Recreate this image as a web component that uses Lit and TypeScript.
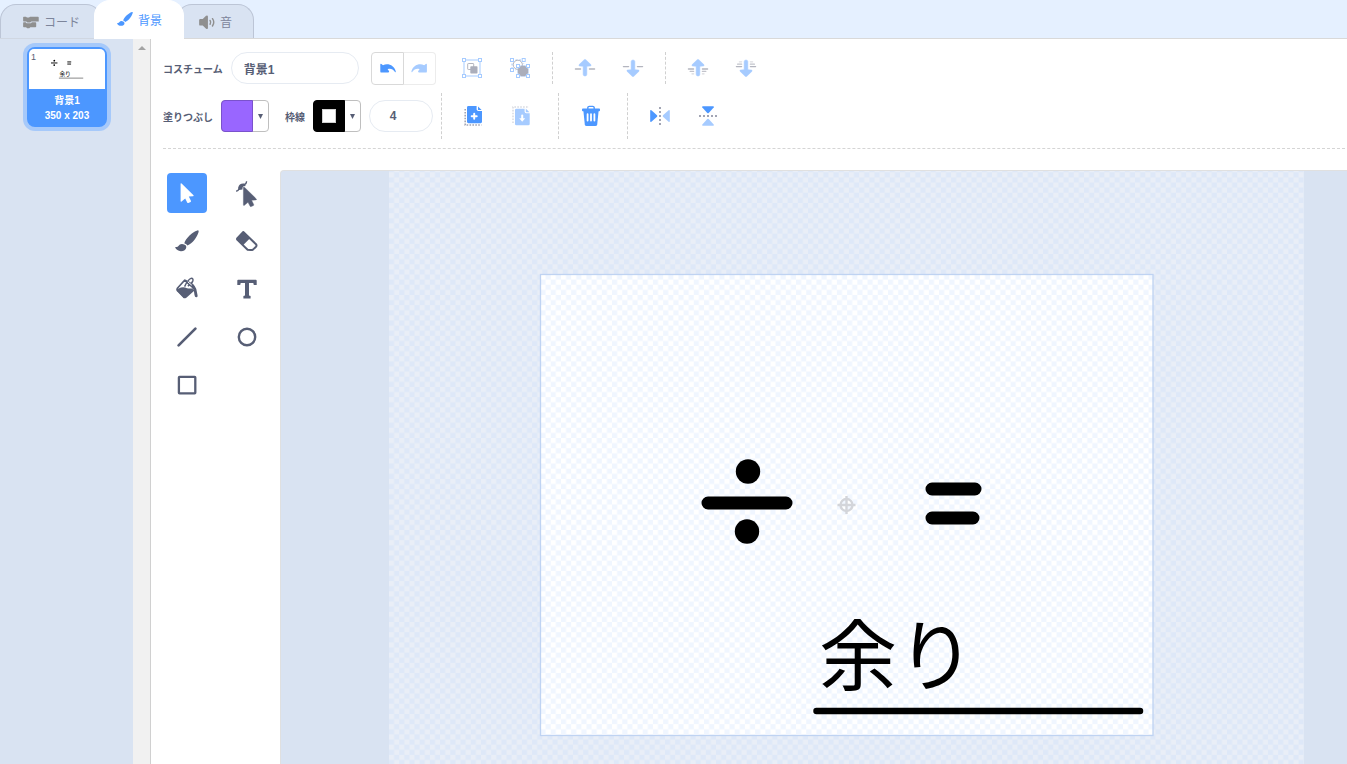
import { LitElement, html, svg, css, type SVGTemplateResult } from "lit";
import { customElement, property, state } from "lit/decorators.js";
import { classMap } from "lit/directives/class-map.js";

const CURSOR = "M0 0.8 Q0 -0.6 1 0.3 L12.9 12 Q13.6 12.9 12.3 13 L8.2 13.4 L10.3 17.6 Q10.6 18.3 10 18.7 L7.8 19.7 Q7 20 6.6 19.2 L4.6 15.4 L1 18.4 Q0 19 0 17.8 Z";

const node = (x: number, y: number) =>
  svg`<rect x=${x - 1.5} y=${y - 1.5} width="3" height="3" fill="#fff" stroke="#a6cbff"/>`;

const rule = (x1: number, x2: number, y: number, opacity = 1) =>
  svg`<path d="M${x1} ${y}H${x2}" stroke="#b3b5bf" stroke-width="1.3" stroke-linecap="round" opacity=${opacity}/>`;

const arrow = (up: boolean) =>
  svg`<path stroke="currentColor" stroke-width=".6" transform=${up ? "" : "translate(0 24) scale(1 -1)"}
    d="M12 3.4 Q12.6 3.4 13 3.9 L18 8.8 Q18.4 9.8 17.4 9.9 L13.8 10.2 L13.8 18.4 Q13.6 20 12 20 Q10.4 20 10.2 18.4 L10.2 10.2 L6.6 9.9 Q5.6 9.8 6 8.8 L11 3.9 Q11.4 3.4 12 3.4Z"/>`;
const UNDO = "M4.7 8.6 Q4.8 7.4 5.8 8 L7.4 9.2 C12 6.6 19 9.2 20.2 15.6 Q20 16.8 19.2 15.7 C17.4 13 14.6 12.2 12 13.2 L13.4 15 Q14 16.4 12.6 16.6 L6 16.6 Q4.7 16.6 4.7 15.4Z";

const ICONS: Record<string, SVGTemplateResult> = {
  select: svg`<path transform="translate(5.6 2.2)" d=${CURSOR}/>`,
  reshape: svg`
    <path d="M1 10.2 Q3.4 10.2 4 7.4 Q5.2 4 8.6 4 Q11.4 3.4 11.6 .2" fill="none" stroke="currentColor" stroke-width="1.3"/>
    <path d="M3.2 6.4 Q4.2 2.2 9 2.6 L10.8 5 L8.4 5.2 L7.6 6.4 L7.4 8.6 L4.2 9Z"/>
    <path transform="translate(8.4 5.9)" stroke="currentColor" stroke-width=".4" d=${CURSOR}/>`,
  brush: svg`
    <path d="M9.3 14.2 C10.5 9.5 17 3.2 22.4 1.4 Q24.2 1.1 23.6 3 C22 8.4 17.6 14.2 12.4 16.6 Q11.8 14.9 9.3 14.2Z"/>
    <path d="M8.3 15.2 Q11.4 15.8 11.3 18.3 C11 21 8.6 22.3 5.8 22.2 C3.4 22 1 20.6 .2 18.6 Q0 17.8 1 18 Q2.8 18.2 3.4 16.9 Q5 14.5 8.3 15.2Z"/>`,
  eraser: svg`
    <path d="M8.3 3 L21 15.2 Q22 16.5 21 17.7 L18 20.6 Q17 21.2 15.6 21 L12.6 20.8 L2.2 10.6 Q1.8 10 2.4 9.2Z" fill="none" stroke="currentColor" stroke-width="2" stroke-linejoin="round"/>
    <path d="M8.3 2.4 L15 9.3 L8 16.3 L1.6 10Z"/>`,
  fill: svg`
    <path d="M9.6 3.2 L2.6 11 Q1.4 12.8 2.8 14 L8.6 20 Q9.6 20.8 10.8 20 L19.8 12 Z" fill="none" stroke="currentColor" stroke-width="1.7" stroke-linejoin="round"/>
    <path d="M2.4 12 L6 10.6 Q9 9.8 12 11.2 Q15 12 19.4 11 L10.8 20.4 Q9.6 21.4 8.4 20.3 L2.2 14Z"/>
    <path d="M9.6 9.6 Q13 2.4 16 1.4 Q18.6 1 17.8 4 Q16.8 7 12.8 9" fill="none" stroke="currentColor" stroke-width="1.5"/>
    <path d="M10 3 Q19 5.5 21.3 12 L22.6 18.4 Q22.8 20.3 21.2 20.3 Q19.8 20.2 19.5 18 L18.6 12Z"/>
    <path d="M10.2 3 L18.6 11" stroke="currentColor" stroke-width="1.5"/>
    <path d="M12.8 4.8 L16.8 8.2" stroke="#fff" stroke-width="1"/>`,
  text: svg`<path d="M3.2 2.8 H20.8 Q21.7 2.8 21.7 3.7 V8 H18.8 L18.3 6 H14 V18.4 L15.6 19 V21.4 H8.4 V19 L10 18.4 V6 H5.7 L5.2 8 H2.3 V3.7 Q2.3 2.8 3.2 2.8Z"/>`,
  line: svg`<path d="M3.6 20.4 L20.4 3.6" stroke="currentColor" stroke-width="2.7" stroke-linecap="round"/>`,
  oval: svg`<circle cx="12" cy="12" r="8.2" fill="none" stroke="currentColor" stroke-width="2.4"/>`,
  rect: svg`<rect x="3.9" y="3.9" width="16.4" height="16.4" rx=".6" fill="none" stroke="currentColor" stroke-width="2.3"/>`,
  undo: svg`<path transform="translate(.6 0)" d=${UNDO}/>`,
  redo: svg`<path transform="translate(24.6 0) scale(-1 1)" d=${UNDO}/>`,
  group: svg`
    <rect x="4" y="4" width="16" height="16" fill="none" stroke="#a6cbff"/>
    <rect x="7.7" y="7.5" width="6" height="6" rx=".6" fill="none" stroke="#b3b5bf"/>
    <rect x="10.3" y="10.3" width="7.2" height="7.2" rx=".8" fill="#abaebb"/>
    ${node(4, 4)}${node(20, 4)}${node(4, 20)}${node(20, 20)}`,
  ungroup: svg`
    <path d="M4 4H15.7M4 4V14M15.7 4V8M4 14H8" stroke="#a6cbff" stroke-dasharray="2 1.5" fill="none"/>
    <circle cx="9.8" cy="8.8" r="4.6" fill="none" stroke="#b3b5bf"/>
    <rect x="10" y="10" width="10" height="10" fill="none" stroke="#a6cbff" stroke-width=".8"/>
    <path d="M13 9.8 H17 L20.2 13 V17 L17 20.2 H13 L9.8 17 V13Z" fill="#abaebb"/>
    ${node(4, 4)}${node(15.7, 4)}${node(4, 14)}${node(10, 10)}${node(20, 10)}${node(10, 20)}${node(20, 20)}`,
  forward: svg`${arrow(true)}${rule(2.4, 7.6, 13)}${rule(16.4, 21.6, 13)}`,
  backward: svg`${arrow(false)}${rule(2.4, 7.6, 10.6)}${rule(16.4, 21.6, 10.6)}`,
  front: svg`${arrow(true)}${rule(2.4, 7.6, 13)}${rule(16.4, 21.6, 13)}${rule(4.2, 7.6, 15.4, 0.8)}${rule(16.4, 19.8, 15.4, 0.8)}${rule(6, 7.6, 17.8, 0.5)}${rule(16.4, 18, 17.8, 0.5)}`,
  back: svg`${arrow(false)}${rule(2.4, 7.6, 10.6)}${rule(16.4, 21.6, 10.6)}${rule(3.6, 7.6, 8.2, 0.8)}${rule(16.4, 20.4, 8.2, 0.8)}${rule(5.4, 7.6, 5.8, 0.45)}${rule(16.4, 18.6, 5.8, 0.45)}`,
  copy: svg`
    <path d="M3.2 5V21H19.5" fill="none" stroke="#a2a5b4" stroke-width="1.6" stroke-dasharray="1.6 1.3"/>
    <path d="M6.4 2 H14.6 V5.6 Q14.8 7 16.2 7 H20 V17.8 Q20 19.2 18.6 19.2 H6.4 Q5 19.2 5 17.8 V3.4 Q5 2 6.4 2Z"/>
    <path d="M16 2.6 L19.6 6 H16.6 Q16 6 16 5.4Z"/>
    <path d="M12.2 9.8V14.8M9.7 12.3H14.7" stroke="#fff" stroke-width="2" stroke-linecap="round"/>`,
  paste: svg`
    <path d="M3 19V3H19" fill="none" stroke="#d8dae1" stroke-width="1.5" stroke-dasharray="1.6 1.3"/>
    <path d="M6.4 4.7 H14.6 V7.8 Q14.8 9.2 16.2 9.2 H19.7 V20 Q19.7 21.3 18.3 21.3 H6.4 Q5 21.3 5 20 V6 Q5 4.7 6.4 4.7Z"/>
    <path d="M15.8 4.6 L19.4 8.2 H16.4 Q15.8 8.2 15.8 7.6Z"/>
    <path d="M12.2 11.4V15" stroke="#fff" stroke-width="2" stroke-linecap="round"/>
    <path d="M9.2 14.2H15.2L12.2 17.8Z" fill="#fff"/>`,
  trash: svg`
    <path d="M8.8 5 V3.6 Q8.9 2.4 10.2 2.4 H13.8 Q15.1 2.4 15.2 3.6 V5" fill="none" stroke="currentColor" stroke-width="1.4"/>
    <path d="M3.8 4.6 H20.2 Q21 4.7 21 5.6 V6.4 Q20.9 7.2 20.2 7.2 H3.8 Q3 7.1 3 6.2 V5.5 Q3.1 4.7 3.8 4.6Z"/>
    <path d="M4.4 7 H19.6 L18.2 20.4 Q18 22 16.4 22 H7.6 Q6 22 5.8 20.4Z"/>
    <path d="M8.6 10.2V16.6M12 10.2V16.6M15.4 10.2V16.6" stroke="#fff" stroke-width="1.8" stroke-linecap="round"/>`,
  flipH: svg`
    <path d="M2.2 6.8 Q2.4 5.6 3.4 6.3 L9 11.3 Q9.6 12 9 12.7 L3.4 17.7 Q2.4 18.4 2.2 17.2Z"/>
    <path d="M21.8 6.8 Q21.6 5.6 20.6 6.3 L15 11.3 Q14.4 12 15 12.7 L20.6 17.7 Q21.6 18.4 21.8 17.2Z" fill="#a6cbff"/>
    <path d="M12 3V21" stroke="#a2a5b4" stroke-width="2" stroke-dasharray="2 2"/>`,
  flipV: svg`
    <path d="M6.8 2.2 Q5.6 2.4 6.3 3.4 L11.3 9 Q12 9.6 12.7 9 L17.7 3.4 Q18.4 2.4 17.2 2.2Z"/>
    <path d="M6.8 21.8 Q5.6 21.6 6.3 20.6 L11.3 15 Q12 14.4 12.7 15 L17.7 20.6 Q18.4 21.6 17.2 21.8Z" fill="#a6cbff"/>
    <path d="M3 12H21" stroke="#a2a5b4" stroke-width="2" stroke-dasharray="2 2"/>`,
  code: svg`
    <path d="M1.2 4 H4.4 L6 5.4 H9 L10.6 4 H22.4 Q23.6 4 23.6 5.2 V11.2 H12.4 L10.8 12.6 H6.6 L5 11.2 H1.2 Q.2 11.2 .2 10.2 V5 Q.2 4 1.2 4Z"/>
    <path d="M1.2 12.2 H4 L5.6 13.8 H11.8 L13.4 12.2 H18.6 Q19.8 12.2 19.8 13.4 V18.6 Q19.8 19.8 18.6 19.8 H11 L9.4 21.2 H6.2 L4.6 19.8 H1.2 Q.2 19.8 .2 18.8 V13.2 Q.2 12.2 1.2 12.2Z"/>`,
  sound: svg`
    <path d="M2 7.6 H5.6 L10.6 2.8 Q13 1.6 13.4 3.6 V21.4 Q13 23.4 10.6 22.2 L5.6 17.4 H2 Q.2 17.4 .2 15.6 V9.4 Q.2 7.6 2 7.6Z"/>
    <path d="M16.6 9.6 Q18.6 12.5 16.6 15.4M20.2 7 Q24.2 12.5 20.2 18" fill="none" stroke="currentColor" stroke-width="2.2" stroke-linecap="round"/>`,
};

@customElement("paint-icon")
class PaintIcon extends LitElement {
  @property() name = "";
  static styles = css`
    :host { display: block; flex: none; width: 24px; height: 24px; }
    svg { display: block; width: 100%; height: 100%; overflow: visible; fill: currentColor; }
  `;
  render() {
    return html`<svg viewBox="0 0 24 24" aria-hidden="true">${ICONS[this.name]}</svg>`;
  }
}

const TABS = [
  { id: "code", icon: "code", label: "コード" },
  { id: "backdrops", icon: "brush", label: "背景" },
  { id: "sounds", icon: "sound", label: "音" },
];

const TOOLS = [
  ["select", "選択"], ["reshape", "形を変える"], ["brush", "筆"], ["eraser", "消しゴム"],
  ["fill", "塗りつぶし"], ["text", "テキスト"], ["line", "直線"], ["oval", "円"], ["rect", "四角形"],
];

/** Shapes of the backdrop, in workspace pixels. */
const drawing = () => svg`
  <circle cx="467" cy="300.5" r="12.2"/>
  <circle cx="466" cy="360.5" r="12.2"/>
  <g stroke="#000" stroke-linecap="round">
    <path d="M427 332H505M651 318H694M651 347H692" stroke-width="13"/>
    <path d="M535.5 540H859" stroke-width="6.5"/>
  </g>
  <text x="538" y="514" font-size="78">余り</text>`;

@customElement("app-root")
class AppRoot extends LitElement {
  @state() private tab = "backdrops";
  @state() private tool = "select";

  static styles = css`
    :host {
      display: flex;
      flex-direction: column;
      height: 100vh;
      overflow: hidden;
      background: #e5f0ff;
      color: #575e75;
      font-family: "Liberation Sans", "Noto Sans CJK JP", sans-serif;
      font-size: 10px;
    }
    * { box-sizing: border-box; }
    button, input { font: inherit; color: inherit; margin: 0; }
    button { padding: 0; border: 0; background: none; display: flex; align-items: center; justify-content: center; }

    .tabs { display: flex; align-items: flex-end; height: 38px; flex: none; }
    .tab {
      height: 34px;
      gap: 5px;
      padding: 0 21px 0 22px;
      border: 1px solid #bcc5d6;
      border-bottom: 0;
      border-radius: 16px 16px 0 0;
      background: #d9e3f2;
      color: #7d859b;
      font-size: 12px;
    }
    .tab + .tab { margin-left: -8px; }
    .tab paint-icon { width: 16px; height: 16px; color: #8f8f8f; }
    .tab.active {
      position: relative;
      z-index: 1;
      height: 39px;
      margin-bottom: -1px;
      padding-bottom: 2px;
      border-color: #fff;
      background: #fff;
      color: #4c97ff;
    }
    .tab.active paint-icon { color: #4c97ff; }

    .body { display: flex; flex: 1; min-height: 0; }
    .list { display: flex; justify-content: flex-end; width: 133px; flex: none; padding: 8px 26px; background: #d9e3f2; border-top: 1px solid #d0d7e2; }
    .scroll { width: 17px; flex: none; background: #f1f1f1; border-top: 1px solid #d9d9d9; display: flex; justify-content: center; padding-top: 7px; }
    .scroll svg { width: 8px; height: 4px; fill: #a3a3a3; }
    .card {
      flex-direction: column;
      justify-content: flex-start;
      align-items: stretch;
      width: 80px;
      height: 80px;
      border: 2px solid #4c97ff;
      border-radius: 8px;
      background: #4c97ff;
      box-shadow: 0 0 0 4px #a6c9fa;
      color: #fff;
      font-weight: bold;
      line-height: 15px;
      text-align: center;
    }
    .thumb { display: block; width: 76px; height: 40px; border-radius: 5px 5px 0 0; background: #fff; font-weight: normal; }
    .caption { padding-top: 4px; }

    .editor { flex: 1; min-width: 0; display: flex; flex-direction: column; background: #fff; border-left: 1px solid #d0d0d0; border-top: 1px solid #d9d9d9; }
    .bars { display: flex; flex-direction: column; gap: 2px; margin: 0 2px 0 12px; padding: 6px 0 9px; border-bottom: 1px dashed #d5d5d5; overflow: hidden; }
    .bar { display: flex; align-items: center; height: 46px; }
    label, .label { font-weight: bold; white-space: nowrap; flex: none; display: flex; align-items: center; gap: 8px; }
    input {
      height: 32px;
      border: 1px solid #e6ebf2;
      border-radius: 16px;
      background: #fff;
      font-size: 12px;
      font-weight: bold;
      outline: none;
    }
    .name { width: 128px; padding: 0 12px; }
    .weight { width: 64px; margin: 0 8px; padding: 0 16px 0 0; text-align: center; }
    .history { display: flex; margin: 0 4px 0 12px; }
    .history button { width: 33px; height: 33px; border: 1px solid #d9d9d9; border-radius: 4px 0 0 4px; color: #4c97ff; }
    .history button + button { width: 32px; border-color: #ececec; border-left: 0; border-radius: 0 4px 4px 0; color: #a6cbff; }
    .set { display: flex; gap: 24px; padding: 0 24px 0 20px; color: #4c97ff; }
    .off { color: #a6cbff; }
    .sep { width: 0; border-left: 1px dashed #d0d0d0; height: 46px; flex: none; }
    .bar.top .set { padding: 0 20px; }
    .bar.top .sep { height: 32px; }
    .swatch { width: 48px; height: 32px; border: 1px solid #bfbfbf; border-radius: 4px; justify-content: flex-start; align-items: stretch; background: #fff; }
    .chip { width: 32px; margin: -1px 0 -1px -1px; background: #9966ff; border: 1px solid #7a52cc; border-radius: 4px 0 0 4px; display: flex; align-items: center; justify-content: center; }
    .chip.black { background: #000; border-color: #000; }
    .hole { width: 14px; height: 14px; background: #fff; border: 1px solid #d0d0d0; }
    .caret { flex: 1; display: flex; align-items: center; justify-content: center; }
    .caret svg { width: 5px; height: 5px; fill: #575e75; }
    .stroke { margin-left: 16px; }

    .work { display: flex; flex: 1; min-height: 0; padding-top: 21px; }
    .tools { display: grid; grid-template-columns: 40px 40px; grid-auto-rows: 40px; align-content: start; gap: 8px 20px; width: 129px; flex: none; padding: 3px 0 0 16px; }
    .tool { border-radius: 4px; }
    .tool.active { background: #4c97ff; color: #fff; }
    .canvas { flex: 1; min-width: 0; border: 1px solid #e0e0e0; border-width: 1px 0 0 1px; border-top-left-radius: 4px; background: #d9e3f2; overflow: hidden; }
    .canvas svg { display: block; width: 100%; height: 100%; }
    svg text { font-family: "Noto Sans CJK JP", sans-serif; }
    svg text.index { font-family: "Liberation Sans", sans-serif; }
  `;

  private action(icon: string, label: string, off = false) {
    return html`<button class=${classMap({ off })} aria-label=${label} ?disabled=${off}>
      <paint-icon name=${icon}></paint-icon>
    </button>`;
  }

  private caret() {
    return html`<span class="caret"><svg viewBox="0 0 5 5" aria-hidden="true"><path d="M0 0H5L2.5 5Z"/></svg></span>`;
  }

  render() {
    return html`
      <div class="tabs" role="tablist">
        ${TABS.map((t) => html`
          <button role="tab" class=${classMap({ tab: true, active: t.id === this.tab })}
            aria-selected=${t.id === this.tab} @click=${() => (this.tab = t.id)}>
            <paint-icon name=${t.icon}></paint-icon>${t.label}
          </button>`)}
      </div>
      <div class="body">
        <aside class="list">
          <button class="card">
            <svg class="thumb" viewBox="0 0 76 40" aria-hidden="true">
              <text class="index" x="2" y="11" font-size="9" fill="#575e75">1</text>
              <g transform="translate(-8.7 -10.2) scale(.0728)">${drawing()}</g>
            </svg>
            <span class="caption">背景1</span>
            <span>350 x 203</span>
          </button>
        </aside>
        <div class="scroll"><svg viewBox="0 0 8 4" aria-hidden="true"><path d="M0 4L4 0L8 4Z"/></svg></div>
        <main class="editor">
          <div class="bars">
            <div class="bar top">
              <label>コスチューム<input class="name" .value=${"背景1"} /></label>
              <div class="history">
                <button aria-label="元に戻す"><paint-icon name="undo"></paint-icon></button>
                <button aria-label="やり直し" disabled><paint-icon name="redo"></paint-icon></button>
              </div>
              <div class="set">${this.action("group", "グループ化", true)}${this.action("ungroup", "グループ解除", true)}</div>
              <div class="sep"></div>
              <div class="set">${this.action("forward", "手前に出す", true)}${this.action("backward", "奥に下げる", true)}</div>
              <div class="sep"></div>
              <div class="set">${this.action("front", "最前面", true)}${this.action("back", "最背面", true)}</div>
            </div>
            <div class="bar">
              <div class="label">塗りつぶし
                <button class="swatch" aria-label="塗りつぶし"><span class="chip"></span>${this.caret()}</button>
              </div>
              <div class="label stroke">枠線
                <button class="swatch" aria-label="枠線"><span class="chip black"><span class="hole"></span></span>${this.caret()}</button>
              </div>
              <input class="weight" aria-label="枠線の太さ" inputmode="numeric" .value=${"4"} />
              <div class="sep"></div>
              <div class="set">${this.action("copy", "コピー")}${this.action("paste", "貼り付け", true)}</div>
              <div class="sep"></div>
              <div class="set">${this.action("trash", "削除")}</div>
              <div class="sep"></div>
              <div class="set">${this.action("flipH", "左右反転")}${this.action("flipV", "上下反転")}</div>
            </div>
          </div>
          <div class="work">
            <div class="tools">
              ${TOOLS.map(([id, label]) => html`
                <button class=${classMap({ tool: true, active: id === this.tool })} aria-label=${label}
                  aria-pressed=${id === this.tool} @click=${() => (this.tool = id)}>
                  <paint-icon name=${id}></paint-icon>
                </button>`)}
            </div>
            <div class="canvas">
              <svg role="img" aria-label="背景1">
                <defs>
                  <pattern id="outer" x="108" y="103.5" width="10.22" height="10.22" patternUnits="userSpaceOnUse">
                    <rect width="10.22" height="10.22" fill="#e9eef7"/>
                    <path d="M5.11 0h5.11v5.11h-5.11zM0 5.11h5.11v5.11h-5.11z" fill="#dee8f8"/>
                  </pattern>
                  <pattern id="inner" x="259.5" y="103.5" width="10.22" height="10.22" patternUnits="userSpaceOnUse">
                    <rect width="10.22" height="10.22" fill="#fff"/>
                    <path d="M5.11 0h5.11v5.11h-5.11zM0 5.11h5.11v5.11h-5.11z" fill="#f0f6ff"/>
                  </pattern>
                </defs>
                <rect x="108" width="915" height="100%" fill="url(#outer)"/>
                <rect x="259.5" y="103.5" width="612.5" height="461" fill="url(#inner)" stroke="#bfd3f2" stroke-width="1.3"/>
                <g fill="none" stroke="#d3d5da" stroke-width="2.4">
                  <circle cx="565.5" cy="334" r="6"/>
                  <path d="M556.5 334H574.5M565.5 325V343"/>
                </g>
                ${drawing()}
              </svg>
            </div>
          </div>
        </main>
      </div>`;
  }
}
